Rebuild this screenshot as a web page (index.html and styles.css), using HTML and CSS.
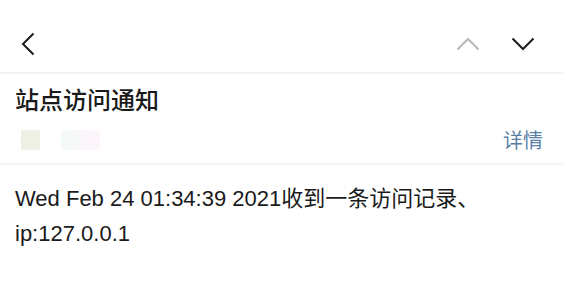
FILE: index.html
```html
<!DOCTYPE html>
<html lang="zh-CN">
<head>
<meta charset="utf-8">
<title>站点访问通知</title>
<link rel="stylesheet" href="styles.css">
</head>
<body>
<div class="page">
  <header class="topbar">
    <svg class="icon back" width="14" height="24" viewBox="0 0 14 24" aria-hidden="true">
      <path d="M12.5 1.5 L2 12 L12.5 22.5" fill="none" stroke="#1c1c1c" stroke-width="2"/>
    </svg>
    <div class="nav">
      <svg class="icon up" width="24" height="14" viewBox="0 0 24 14" aria-hidden="true">
        <path d="M1.5 12.5 L12 2 L22.5 12.5" fill="none" stroke="#b8b8b8" stroke-width="2"/>
      </svg>
      <svg class="icon down" width="24" height="14" viewBox="0 0 24 14" aria-hidden="true">
        <path d="M1.5 1.5 L12 12 L22.5 1.5" fill="none" stroke="#1c1c1c" stroke-width="2"/>
      </svg>
    </div>
  </header>
  <section class="mailhead">
    <h1 class="title">站点访问通知</h1>
    <div class="meta">
      <div class="chips">
        <span class="chip chip-a"></span>
        <span class="chip chip-b"></span>
      </div>
      <a class="detail">详情</a>
    </div>
  </section>
  <main class="content">Wed Feb 24 01:34:39 2021收到一条访问记录、ip:127.0.0.1</main>
</div>
</body>
</html>
```
FILE: styles.css
```css
html, body {
  margin: 0;
  padding: 0;
  background: #ffffff;
}
.page {
  width: 563px;
  font-family: "Liberation Sans", "Noto Sans CJK SC", sans-serif;
  color: #1a1a1a;
}
.topbar {
  height: 56px;
  padding: 16px 28px 0 21px;
  display: flex;
  align-items: center;
  justify-content: space-between;
  border-bottom: 2px solid #f4f4f4;
}
.icon {
  display: block;
}
.nav {
  display: flex;
  align-items: center;
  gap: 31px;
}
.mailhead {
  border-bottom: 2px solid #f4f4f4;
}
.title {
  margin: 8px 0 0;
  padding-left: 15px;
  font-family: "Noto Sans CJK SC", sans-serif;
  font-size: 24px;
  font-weight: 500;
  line-height: 34px;
  color: #1a1a1a;
}
.meta {
  height: 47px;
  display: flex;
  align-items: center;
  justify-content: space-between;
  padding: 0 20px 0 21px;
}
.chips {
  display: flex;
  gap: 21px;
}
.chip {
  display: block;
  height: 20px;
}
.chip-a {
  width: 19px;
  background: #eef0e5;
}
.chip-b {
  width: 39px;
  background: linear-gradient(90deg, #f4faf7 0%, #f6f8f7 45%, #fcf4fc 60%, #fdf6fd 100%);
}
.detail {
  font-family: "Noto Sans CJK SC", sans-serif;
  font-size: 20px;
  line-height: 20px;
  color: #5a7fa7;
}
.content {
  display: block;
  margin-top: 16px;
  padding: 0 15px 0 15px;
  font-size: 22px;
  line-height: 35px;
  color: #1a1a1a;
}
```
